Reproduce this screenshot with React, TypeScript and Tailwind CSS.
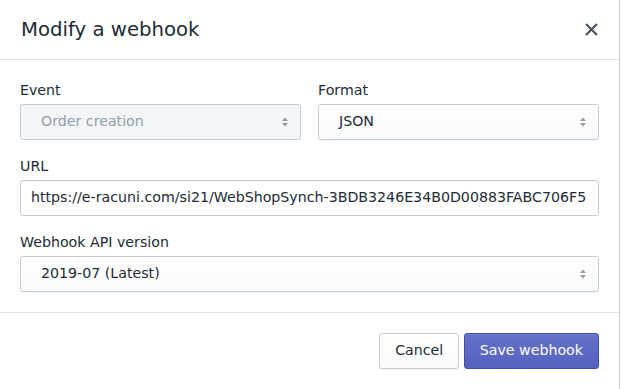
import React from "react";

const font = { fontFamily: '"DejaVu Sans", sans-serif' };

function Caret() {
  return (
    <svg width="8" height="12" viewBox="0 0 8 12" className="shrink-0">
      <path d="M4 1.5 L7 5 L1 5 Z" fill="#919eab" />
      <path d="M4 10.5 L7 7 L1 7 Z" fill="#919eab" />
    </svg>
  );
}

function Select({ value, disabled }: { value: string; disabled?: boolean }) {
  return (
    <div
      className={
        "flex h-[36px] items-center justify-between rounded-[3px] border border-[#c4cdd5] pl-[20px] pr-[11px] text-[14.2px] " +
        (disabled
          ? "bg-[#f4f6f8] text-[#919eab]"
          : "bg-gradient-to-b from-white to-[#f9fafb] text-[#212b36] shadow-[0_1px_0_0_rgba(22,29,37,0.05)]")
      }
    >
      <span>{value}</span>
      <Caret />
    </div>
  );
}

function Label({ children }: { children: React.ReactNode }) {
  return <div className="mb-[4px] text-[14.2px] leading-[20px] text-[#212b36]">{children}</div>;
}

export default function App() {
  return (
    <div className="h-[389px] w-[621px] overflow-hidden bg-white" style={font}>
      <div className="h-full w-[620px] border-r border-[#c4cdd5] bg-white">
        <div className="flex h-[60px] items-center justify-between border-b border-[#dfe3e8] pl-[21px] pr-[21px]">
          <div className="text-[19.7px] leading-[28px] text-[#212b36]">Modify a webhook</div>
          <svg width="13" height="13" viewBox="0 0 13 13">
            <path d="M1 1 L12 12 M12 1 L1 12" stroke="#454f5b" strokeWidth="2" />
          </svg>
        </div>
        <div className="flex flex-col gap-[16px] px-[20px] pb-[20px] pt-[20px]">
          <div className="flex gap-[17px]">
            <div className="flex-1">
              <Label>Event</Label>
              <Select value="Order creation" disabled />
            </div>
            <div className="flex-1">
              <Label>Format</Label>
              <Select value="JSON" />
            </div>
          </div>
          <div>
            <Label>URL</Label>
            <div className="flex h-[36px] items-center overflow-hidden whitespace-nowrap rounded-[3px] border border-[#c4cdd5] bg-white px-[10px] text-[14.2px] text-[#212b36] shadow-[inset_0_1px_0_0_rgba(99,115,129,0.05)]">
              https://e-racuni.com/si21/WebShopSynch-3BDB3246E34B0D00883FABC706F5
            </div>
          </div>
          <div>
            <Label>Webhook API version</Label>
            <Select value="2019-07 (Latest)" />
          </div>
        </div>
        <div className="flex justify-end gap-[4.5px] border-t border-[#dfe3e8] p-[20px]">
          <button className="h-[36px] rounded-[3px] border border-[#c4cdd5] bg-gradient-to-b from-white to-[#f9fafb] px-[15px] text-[14.2px] text-[#212b36] shadow-[0_1px_0_0_rgba(22,29,37,0.05)]">
            Cancel
          </button>
          <button className="h-[36px] rounded-[3px] border border-[#3f4eae] bg-gradient-to-b from-[#6371c7] to-[#5563c1] px-[15px] text-[14.2px] text-white shadow-[inset_0_1px_0_0_#6f7bcb]">
            Save webhook
          </button>
        </div>
      </div>
    </div>
  );
}
